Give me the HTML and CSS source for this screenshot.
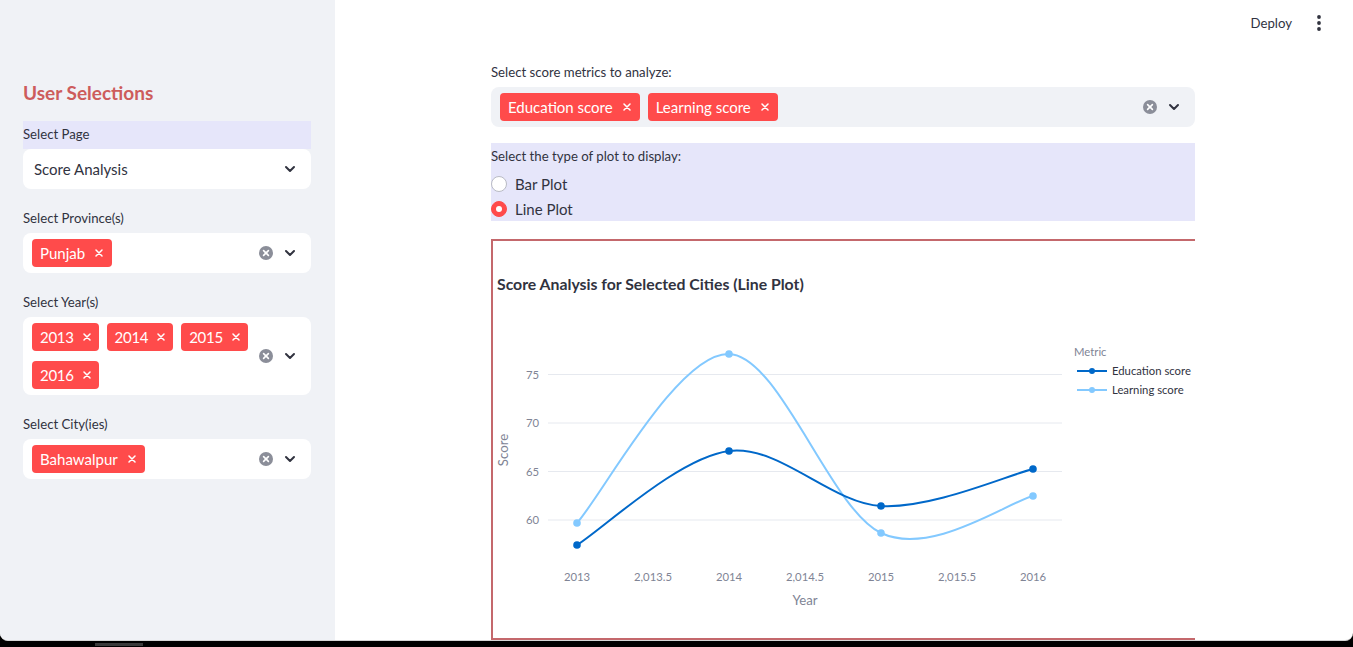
FILE: index.html
```html
<!DOCTYPE html>
<html lang="en">
<head>
<meta charset="utf-8">
<title>Score Analysis</title>
<link rel="stylesheet" href="styles.css">
</head>
<body>
<div class="app">
  <aside class="sidebar">
    <h2 class="side-title">User Selections</h2>

    <div class="widget">
      <div class="label hl">Select Page</div>
      <div class="select single">
        <span class="value">Score Analysis</span>
        <span class="icons">
          <svg class="chev" viewBox="0 0 14 14" width="14" height="14"><path d="M3 5 L7 9 L11 5" fill="none" stroke="#31333f" stroke-width="2" stroke-linecap="round" stroke-linejoin="round"/></svg>
        </span>
      </div>
    </div>

    <div class="widget">
      <div class="label">Select Province(s)</div>
      <div class="select">
        <div class="tags">
          <span class="tag">Punjab<svg class="tx" viewBox="0 0 8 8" width="8" height="8"><path d="M1 1 L7 7 M7 1 L1 7" stroke="#fff" stroke-width="1.5" stroke-linecap="round"/></svg></span>
        </div>
        <span class="icons">
          <svg class="clr" viewBox="0 0 14 14" width="14" height="14"><circle cx="7" cy="7" r="7" fill="#8b8e99"/><path d="M4.6 4.6 L9.4 9.4 M9.4 4.6 L4.6 9.4" stroke="#fff" stroke-width="1.6" stroke-linecap="round"/></svg>
          <svg class="chev" viewBox="0 0 14 14" width="14" height="14"><path d="M3 5 L7 9 L11 5" fill="none" stroke="#31333f" stroke-width="2" stroke-linecap="round" stroke-linejoin="round"/></svg>
        </span>
      </div>
    </div>

    <div class="widget">
      <div class="label">Select Year(s)</div>
      <div class="select">
        <div class="tags">
          <span class="tag num">2013<svg class="tx" viewBox="0 0 8 8" width="8" height="8"><path d="M1 1 L7 7 M7 1 L1 7" stroke="#fff" stroke-width="1.5" stroke-linecap="round"/></svg></span>
          <span class="tag num">2014<svg class="tx" viewBox="0 0 8 8" width="8" height="8"><path d="M1 1 L7 7 M7 1 L1 7" stroke="#fff" stroke-width="1.5" stroke-linecap="round"/></svg></span>
          <span class="tag num">2015<svg class="tx" viewBox="0 0 8 8" width="8" height="8"><path d="M1 1 L7 7 M7 1 L1 7" stroke="#fff" stroke-width="1.5" stroke-linecap="round"/></svg></span>
          <span class="tag num">2016<svg class="tx" viewBox="0 0 8 8" width="8" height="8"><path d="M1 1 L7 7 M7 1 L1 7" stroke="#fff" stroke-width="1.5" stroke-linecap="round"/></svg></span>
        </div>
        <span class="icons">
          <svg class="clr" viewBox="0 0 14 14" width="14" height="14"><circle cx="7" cy="7" r="7" fill="#8b8e99"/><path d="M4.6 4.6 L9.4 9.4 M9.4 4.6 L4.6 9.4" stroke="#fff" stroke-width="1.6" stroke-linecap="round"/></svg>
          <svg class="chev" viewBox="0 0 14 14" width="14" height="14"><path d="M3 5 L7 9 L11 5" fill="none" stroke="#31333f" stroke-width="2" stroke-linecap="round" stroke-linejoin="round"/></svg>
        </span>
      </div>
    </div>

    <div class="widget">
      <div class="label">Select City(ies)</div>
      <div class="select">
        <div class="tags">
          <span class="tag">Bahawalpur<svg class="tx" viewBox="0 0 8 8" width="8" height="8"><path d="M1 1 L7 7 M7 1 L1 7" stroke="#fff" stroke-width="1.5" stroke-linecap="round"/></svg></span>
        </div>
        <span class="icons">
          <svg class="clr" viewBox="0 0 14 14" width="14" height="14"><circle cx="7" cy="7" r="7" fill="#8b8e99"/><path d="M4.6 4.6 L9.4 9.4 M9.4 4.6 L4.6 9.4" stroke="#fff" stroke-width="1.6" stroke-linecap="round"/></svg>
          <svg class="chev" viewBox="0 0 14 14" width="14" height="14"><path d="M3 5 L7 9 L11 5" fill="none" stroke="#31333f" stroke-width="2" stroke-linecap="round" stroke-linejoin="round"/></svg>
        </span>
      </div>
    </div>
  </aside>

  <main class="main">
    <header class="topbar">
      <span class="deploy">Deploy</span>
      <span class="kebab">
        <svg viewBox="0 0 6 18" width="6" height="18"><circle cx="3" cy="3" r="1.9" fill="#31333f"/><circle cx="3" cy="9" r="1.9" fill="#31333f"/><circle cx="3" cy="15" r="1.9" fill="#31333f"/></svg>
      </span>
    </header>

    <div class="content">
      <div class="widget">
        <div class="label">Select score metrics to analyze:</div>
        <div class="select grey">
          <div class="tags">
            <span class="tag">Education score<svg class="tx" viewBox="0 0 8 8" width="8" height="8"><path d="M1 1 L7 7 M7 1 L1 7" stroke="#fff" stroke-width="1.5" stroke-linecap="round"/></svg></span>
            <span class="tag">Learning score<svg class="tx" viewBox="0 0 8 8" width="8" height="8"><path d="M1 1 L7 7 M7 1 L1 7" stroke="#fff" stroke-width="1.5" stroke-linecap="round"/></svg></span>
          </div>
          <span class="icons">
            <svg class="clr" viewBox="0 0 14 14" width="14" height="14"><circle cx="7" cy="7" r="7" fill="#8b8e99"/><path d="M4.6 4.6 L9.4 9.4 M9.4 4.6 L4.6 9.4" stroke="#fff" stroke-width="1.6" stroke-linecap="round"/></svg>
            <svg class="chev" viewBox="0 0 14 14" width="14" height="14"><path d="M3 5 L7 9 L11 5" fill="none" stroke="#31333f" stroke-width="2" stroke-linecap="round" stroke-linejoin="round"/></svg>
          </span>
        </div>
      </div>

      <div class="widget radio-group">
        <div class="label">Select the type of plot to display:</div>
        <label class="option"><span class="dot"></span>Bar Plot</label>
        <label class="option"><span class="dot on"></span>Line Plot</label>
      </div>

      <div class="chart-box">
        <svg class="chart" viewBox="493 241 702 397" width="702" height="397">
          <text x="497" y="290" class="c-title">Score Analysis for Selected Cities (Line Plot)</text>

          <g class="grid">
            <line x1="548" y1="374.5" x2="1062" y2="374.5"/>
            <line x1="548" y1="423" x2="1062" y2="423"/>
            <line x1="548" y1="471.5" x2="1062" y2="471.5"/>
            <line x1="548" y1="520" x2="1062" y2="520"/>
          </g>

          <g class="ytick">
            <text x="539" y="378.5">75</text>
            <text x="539" y="427">70</text>
            <text x="539" y="475.5">65</text>
            <text x="539" y="524">60</text>
          </g>

          <g class="xtick">
            <text x="577" y="581">2013</text>
            <text x="653" y="581">2,013.5</text>
            <text x="729" y="581">2014</text>
            <text x="805" y="581">2,014.5</text>
            <text x="881" y="581">2015</text>
            <text x="957" y="581">2,015.5</text>
            <text x="1033" y="581">2016</text>
          </g>

          <text x="805" y="605" class="axis-title" text-anchor="middle">Year</text>
          <text x="0" y="0" class="axis-title" text-anchor="middle" transform="translate(508 450) rotate(-90)">Score</text>

          <path class="ln light" d="M577 523 C602.3 494.8 678.3 352.3 729 354 C779.7 355.7 830.3 509.3 881 533 C931.7 556.7 1007.7 502.2 1033 496"/>
          <path class="ln dark" d="M577 545 C602.3 529.3 678.3 457.5 729 451 C779.7 444.5 830.3 503 881 506 C931.7 509 1007.7 475.2 1033 469"/>

          <g fill="#83c9ff">
            <circle cx="577" cy="523" r="3.8"/>
            <circle cx="729" cy="354" r="3.8"/>
            <circle cx="881" cy="533" r="3.8"/>
            <circle cx="1033" cy="496" r="3.8"/>
          </g>
          <g fill="#0068c9">
            <circle cx="577" cy="545" r="3.8"/>
            <circle cx="729" cy="451" r="3.8"/>
            <circle cx="881" cy="506" r="3.8"/>
            <circle cx="1033" cy="469" r="3.8"/>
          </g>

          <text x="1074" y="356" class="leg-title">Metric</text>
          <line x1="1077" y1="371" x2="1107" y2="371" stroke="#0068c9" stroke-width="2"/>
          <circle cx="1092" cy="371" r="3" fill="#0068c9"/>
          <text x="1112" y="375" class="leg">Education score</text>
          <line x1="1077" y1="390" x2="1107" y2="390" stroke="#83c9ff" stroke-width="2"/>
          <circle cx="1092" cy="390" r="3" fill="#83c9ff"/>
          <text x="1112" y="394" class="leg">Learning score</text>
        </svg>
      </div>
    </div>
  </main>
</div>
<div class="taskbar-bit"></div>
</body>
</html>
```

FILE: styles.css
```css
* { box-sizing: border-box; }

html, body {
  margin: 0;
  padding: 0;
  background: #000;
  font-family: Lato, "Noto Sans", sans-serif;
  color: #31333f;
}

.app {
  display: flex;
  height: 641px;
  background: #fff;
  border-bottom: 1px solid #d6d6d6;
  border-radius: 0 0 8px 8px;
  overflow: hidden;
}

/* Sidebar */
.sidebar {
  width: 335px;
  flex: 0 0 335px;
  background: #f0f2f6;
  padding: 79px 24px 0 23px;
  display: flex;
  flex-direction: column;
  gap: 16px;
}

.side-title {
  margin: 0 0 -2px;
  font-size: 19px;
  line-height: 28px;
  font-weight: 700;
  color: #cd5c5c;
}

.widget {
  display: flex;
  flex-direction: column;
}

.label {
  font-size: 13.2px;
  line-height: 20px;
  padding: 3px 0 5px;
  color: #31333f;
}

.label.hl {
  background: #e6e6fa;
}

.select {
  display: flex;
  align-items: center;
  min-height: 40px;
  background: #fff;
  border-radius: 8px;
  padding: 6px 0 6px 9px;
}

.select.grey {
  background: #f0f2f6;
}

.select.single {
  padding-left: 11px;
}

.value {
  flex: 1;
  font-size: 15px;
  line-height: 28px;
}

.tags {
  flex: 1;
  display: flex;
  flex-wrap: wrap;
  gap: 10px 8px;
}

.tag {
  display: inline-flex;
  align-items: center;
  gap: 10px;
  height: 28px;
  padding: 0 9px 0 8px;
  background: #ff4b4b;
  color: #fff;
  border-radius: 4px;
  font-size: 15px;
}

.tag.num {
  gap: 9px;
  padding-right: 8px;
  letter-spacing: -0.3px;
}

.tx { display: block; }

.icons {
  display: flex;
  align-items: center;
  gap: 10px;
  padding: 0 14px 0 4px;
}

.icons svg { display: block; }

/* Main */
.main {
  flex: 1;
  display: flex;
  flex-direction: column;
  overflow: hidden;
  padding-right: 2px;
}

.topbar {
  height: 46px;
  flex: 0 0 46px;
  display: flex;
  align-items: center;
  justify-content: flex-end;
  padding-right: 18px;
}

.deploy {
  font-size: 13.2px;
  margin-right: 13px;
}

.kebab {
  width: 28px;
  height: 28px;
  display: flex;
  align-items: center;
  justify-content: center;
}

.kebab svg { display: block; }

.content {
  width: 704px;
  margin: 0 auto;
  padding-top: 13px;
  display: flex;
  flex-direction: column;
  gap: 16px;
}

.radio-group {
  background: #e6e6fa;
}

.option {
  display: flex;
  align-items: center;
  gap: 8px;
  height: 25px;
  font-size: 15px;
}

.dot {
  width: 16px;
  height: 16px;
  border-radius: 50%;
  background: #fff;
  border: 1px solid #b9bbc4;
  display: flex;
  align-items: center;
  justify-content: center;
}

.dot.on {
  background: #ff4b4b;
  border-color: #ff4b4b;
}

.dot.on::after {
  content: "";
  width: 6px;
  height: 6px;
  border-radius: 50%;
  background: #fff;
}

/* Chart */
.chart-box {
  margin-top: 2px;
  height: 401px;
  border: 2px solid #c4686c;
  border-right: none;
  background: #fff;
}

.chart {
  display: block;
}

.c-title {
  font-family: Lato, "Noto Sans", sans-serif;
  font-weight: 700;
  font-size: 15.8px;
  fill: #31333f;
}

.grid line {
  stroke: #e6e9ef;
  stroke-width: 1;
}

.ytick text {
  font-family: Lato, sans-serif;
  font-size: 11.3px;
  fill: #808495;
  text-anchor: end;
}

.xtick text {
  font-family: Lato, sans-serif;
  font-size: 11.3px;
  fill: #808495;
  text-anchor: middle;
}

.axis-title {
  font-family: Lato, sans-serif;
  font-size: 13.2px;
  fill: #808495;
}

.ln {
  fill: none;
  stroke-width: 2;
}

.ln.dark { stroke: #0068c9; }
.ln.light { stroke: #83c9ff; }

.leg-title {
  font-family: Lato, sans-serif;
  font-size: 11.3px;
  fill: #808495;
}

.leg {
  font-family: Lato, sans-serif;
  font-size: 11.3px;
  fill: #31333f;
}

.taskbar-bit {
  width: 48px;
  height: 3px;
  margin: 2px 0 0 95px;
  background: #3a3a3a;
}
```
